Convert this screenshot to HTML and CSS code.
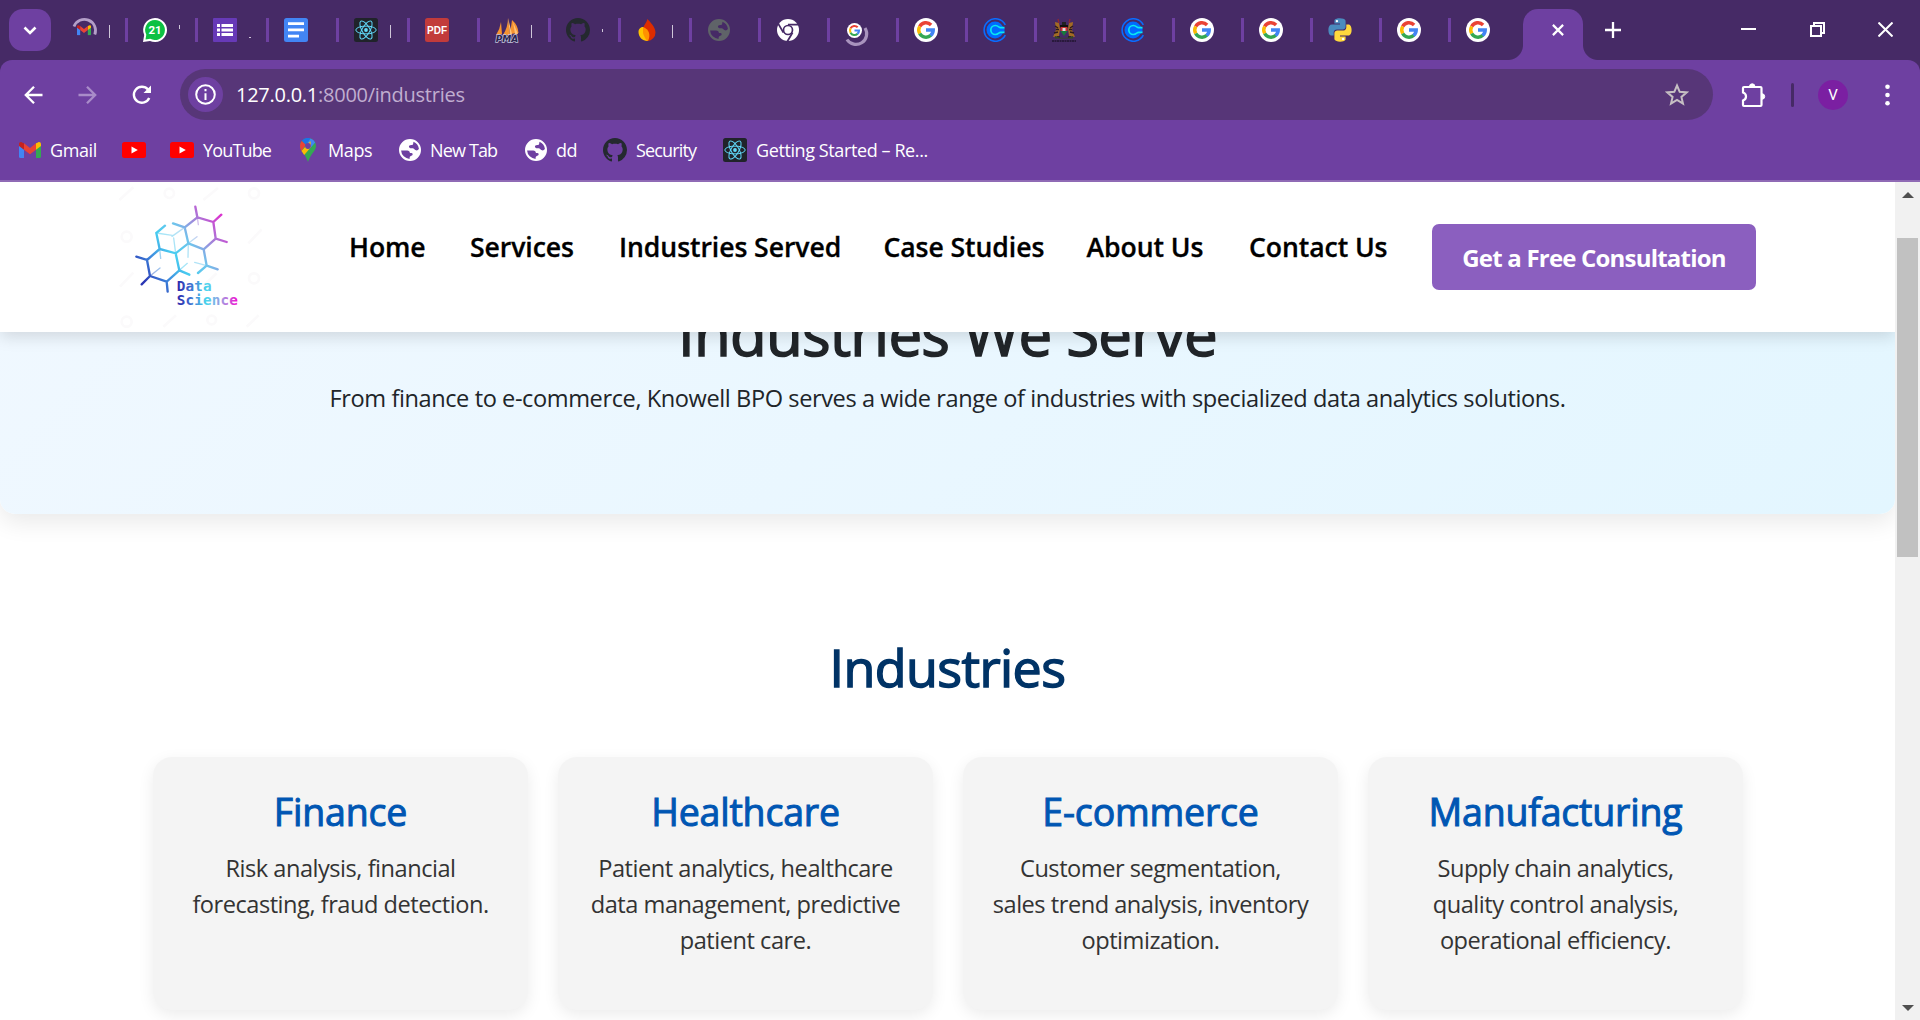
FILE: index.html
```html
<!DOCTYPE html>
<html lang="en">
<head>
<meta charset="utf-8">
<title>Industries</title>
<link rel="stylesheet" href="styles.css">
</head>
<body>
<svg class="defs" aria-hidden="true">
  <defs>
    <symbol id="google" viewBox="0 0 24 24">
      <circle cx="12" cy="12" r="12" fill="#fff"/>
      <g fill="none" stroke-width="3.5">
        <path d="M5.7 8.5A7.2 7.2 0 0 1 17.1 6.9" stroke="#ea4335"/>
        <path d="M5.7 15.5A7.2 7.2 0 0 1 5.7 8.5" stroke="#fbbc05"/>
        <path d="M16.9 17.3A7.2 7.2 0 0 1 5.7 15.5" stroke="#34a853"/>
        <path d="M12 12h7.2A7.2 7.2 0 0 1 16.6 17.5" stroke="#4285f4"/>
      </g>
    </symbol>
    <symbol id="gmail" viewBox="0 0 22 16">
      <path d="M0 3v11.5A1.5 1.5 0 0 0 1.5 16H5V6.7z" fill="#4285f4"/>
      <path d="M22 3v11.5a1.5 1.5 0 0 1-1.500 1.500H17V6.700z" fill="#34a853"/>
      <path d="M17 1.300 19 .4c1.500-.8 3 .2 3 1.800V4l-5 3.800z" fill="#fbbc04"/>
      <path d="M5 1.300 3 .4C1.500-.4 0 .6 0 2.200V4l5 3.800z" fill="#c5221f"/>
      <path d="M5 1.300l6 4.600 6-4.600v6.500l-6 4.500-6-4.500z" fill="#ea4335"/>
    </symbol>
    <symbol id="react" viewBox="0 0 24 24">
      <rect width="24" height="24" rx="2.500" fill="#20232a"/>
      <circle cx="12" cy="12" r="1.900" fill="#61dafb"/>
      <g fill="none" stroke="#61dafb" stroke-width="1">
        <ellipse cx="12" cy="12" rx="10.200" ry="3.900"/>
        <ellipse cx="12" cy="12" rx="10.200" ry="3.900" transform="rotate(60 12 12)"/>
        <ellipse cx="12" cy="12" rx="10.200" ry="3.900" transform="rotate(120 12 12)"/>
      </g>
    </symbol>
    <symbol id="github" viewBox="0 0 16 16">
      <path fill="#24292f" d="M8 0C3.580 0 0 3.580 0 8c0 3.540 2.290 6.530 5.470 7.590.4.070.55-.17.55-.38 0-.19-.01-.82-.01-1.490-2.010.37-2.530-.49-2.690-.94-.09-.23-.48-.94-.82-1.130-.28-.15-.68-.52-.01-.53.63-.01 1.080.58 1.230.82.72 1.210 1.870.87 2.330.66.070-.52.28-.87.51-1.070-1.780-.2-3.640-.89-3.640-3.950 0-.87.31-1.590.82-2.150-.08-.2-.36-1.020.08-2.120 0 0 .67-.21 2.200.82.64-.18 1.320-.27 2-.27s1.360.09 2 .27c1.530-1.040 2.200-.82 2.200-.82.44 1.100.16 1.920.08 2.120.51.56.82 1.270.82 2.150 0 3.070-1.870 3.750-3.650 3.950.29.25.54.73.54 1.480 0 1.070-.01 1.930-.01 2.200 0 .21.15.46.55.38A8.010 8.010 0 0 0 16 8c0-4.420-3.580-8-8-8z"/>
    </symbol>
    <symbol id="globe" viewBox="0 0 22 22">
      <path fill="currentColor" fill-rule="evenodd" d="M11 0a11 11 0 1 0 0 22 11 11 0 0 0 0-22zM14.500 2.700A9 9 0 0 1 19.900 9.800c-.9 1.700-2.200 1.900-3.600 1.200-1-.6-1.300-1.700-2.600-1.800-1.500 0-2.300.2-3.400-.8-.8-.9-.2-2 .9-2.200 1.300-.2 2.600 0 2.900-1.200zM2.100 11.500h6.100c1.700 0 2.700 1 2.700 2.500h1.500c1.200 0 1.700 1.300.9 2.200l-1.900 1c-.9.500-.8 1.700-.8 2.700A9 9 0 0 1 2.100 11.500z"/>
    </symbol>
    <symbol id="calendly" viewBox="0 0 24 24">
      <path d="M23 6.500A12 12 0 1 0 23 17.500" fill="none" stroke="#0a6cff" stroke-width="1.700" transform="translate(.8 .8) scale(.935)"/>
      <circle cx="12" cy="12" r="8.500" fill="#006bff"/>
      <path d="M16 9.300h8v5.400h-8z" fill="#462a66"/>
      <path d="M21.500 9.700h-4c-1.700 0-2-2.200-5.200-2.200a4.500 4.500 0 0 0 0 9c3.200 0 3.500-2.200 5.200-2.200h4" fill="#006bff" stroke="#0ae8f0" stroke-width="1.700"/>
    </symbol>
    <symbol id="youtube" viewBox="0 0 24 16">
      <rect width="24" height="16" rx="2.500" fill="#f00"/><path d="M9.500 4.500v7l6.300-3.500z" fill="#fff"/>
    </symbol>
  </defs>
</svg>

<div class="browser">
  <div class="tabstrip">
    <button class="tab-search"><svg width="14" height="9" viewBox="0 0 14 9"><path d="M1.500 1.500 7 7l5.500-5.500" fill="none" stroke="#fff" stroke-width="2.600"/></svg></button>
    <div class="tabs">
      <div class="tab wide"><svg width="24" height="24" viewBox="0 0 24 24"><path d="M1 8.500A11 11 0 0 1 21.800 16.500" fill="none" stroke="#b49fc8" stroke-width="2.800"/><svg x="4" y="7" width="14" height="10.500"><use href="#gmail"/></svg></svg><i class="sliver bar"></i></div>
      <div class="tab wide"><svg width="24" height="24" viewBox="0 0 24 24"><path d="M12 0a12 12 0 1 1-5 22.900L0 24l1.200-7A12 12 0 0 1 12 0z" fill="#fff"/><path d="M12 2a10 10 0 1 1-4.800 18.800L2.500 21.500l.8-4.700A10 10 0 0 1 12 2z" fill="#0cc143"/><text x="12" y="16.300" text-anchor="middle" class="badge-num">21</text></svg><i class="sliver high"></i></div>
      <div class="tab wide"><svg width="24" height="24" viewBox="0 0 24 24"><rect width="24" height="24" rx="1" fill="#673ab7"/><path d="M4 6h3v3H4zM8.500 6H20v3H8.500zM4 10.500h3v3H4zM8.500 10.500H20v3H8.500zM4 15h3v3H4zM8.500 15H20v3H8.500z" fill="#fff"/></svg><i class="sliver low"></i></div>
      <div class="tab wide"><svg width="24" height="24" viewBox="0 0 24 24"><rect width="24" height="24" rx="2.500" fill="#4285f4"/><path d="M4 4.200h16v2.700H4zM4 10.600h16v2.700H4zM4 16.800h11v2.700H4z" fill="#fff"/></svg></div>
      <div class="tab wide"><svg width="24" height="24"><use href="#react"/></svg><i class="sliver bar"></i></div>
      <div class="tab wide"><svg width="24" height="24" viewBox="0 0 24 24"><rect width="24" height="24" rx="2.500" fill="#c23b3b"/><text x="12" y="16.300" text-anchor="middle" class="pdf">PDF</text></svg></div>
      <div class="tab wide"><svg width="24" height="24" viewBox="0 0 24 24"><path d="M1 17Q5 11 6 4l1 12zM8 17Q13 9 13 0l2 17zM15 16 17 2q6 5 6.500 13z" fill="#f59331"/><path d="M13 0l2 17 2-1zM18 4l2 12h3z" fill="#ffc277"/><text x="12" y="23.600" text-anchor="middle" class="pma">PMA</text></svg><i class="sliver bar"></i></div>
      <div class="tab wide"><svg width="24" height="24"><use href="#github"/></svg><i class="sliver dot"></i></div>
      <div class="tab wide"><svg width="24" height="24" viewBox="0 0 24 24"><path d="M11.500 1C14 4 19.500 9 19.500 14.500A8.500 8.500 0 0 1 11.500 23C8 23 6 16 7 11c.6-4 3.500-6 4.500-10z" fill="#dd2c00"/><path d="M2.500 14C2.500 10.500 5 9 7 9l1.500 2c4 3 4.500 7 3 12C6.500 23 2.500 19 2.500 14z" fill="#ffc400"/><path d="M7 9c6 2 8 8 5 14-2.500-1-4-5-5-8z" fill="#ff9100"/></svg><i class="sliver bar"></i></div>
      <div class="tab dim"><svg width="24" height="24" viewBox="-1 -1 24 24"><use href="#globe" width="22" height="22"/></svg></div>
      <div class="tab"><svg width="24" height="24" viewBox="0 0 24 24"><circle cx="12" cy="12" r="11" fill="#fff"/><circle cx="12" cy="12" r="4.500" fill="none" stroke="#462a66" stroke-width="1.700"/><path d="M12 6.700H22.500M7.400 14.600 2.200 5.600M16.600 14.600 11.300 23.500" stroke="#462a66" stroke-width="1.800"/></svg></div>
      <div class="tab"><svg width="24" height="24" viewBox="0 0 24 24"><path d="M20 10A9.500 9.500 0 0 1 2 21.500" fill="none" stroke="#a893bd" stroke-width="3.200"/><use href="#google" x="2" y="5" width="15" height="15"/></svg></div>
      <div class="tab"><svg width="24" height="24"><use href="#google"/></svg></div>
      <div class="tab"><svg width="24" height="24"><use href="#calendly"/></svg></div>
      <div class="tab"><svg width="24" height="24" viewBox="0 0 24 24"><path d="M3 4l4 1 1 6-1 7-6 1 3-7zM21 4l-4 1-1 6 1 7 6 1-3-7z" fill="#a36b23"/><path d="M3 8l3 2M2 15l4-1M21 8l-3 2M22 15l-4-1M5 19h3M16 19h3M4 11.500h3M17 11.500h3" stroke="#2a1a20" stroke-width="1.500"/><path d="M6 1l1 4M18 1l-1 4" stroke="#8f2834" stroke-width="1.300"/><path d="M8 7h8v3H8z" fill="#111"/><path d="M10 4h4v3h-4z" fill="#222"/><path d="M8.500 9h7v4h-7z" fill="#c83232"/><path d="M8.500 13h7L12 18z" fill="#177a3c"/><path d="M10.500 10h3v3h-3z" fill="#ddd"/><path d="M3 18q9 4 18 0v2.500H3z" fill="#354a22"/><path d="M0 23h24" stroke="#21152f" stroke-width="1.600" stroke-dasharray="2 .5"/></svg></div>
      <div class="tab"><svg width="24" height="24"><use href="#calendly"/></svg></div>
      <div class="tab"><svg width="24" height="24"><use href="#google"/></svg></div>
      <div class="tab"><svg width="24" height="24"><use href="#google"/></svg></div>
      <div class="tab"><svg width="24" height="24" viewBox="0 0 24 24"><path d="M11.900.3C6 .3 6.400 2.900 6.400 2.900v2.700H12v.8H4.100S.4 6 .4 11.900s3.300 5.700 3.300 5.700h2v-2.800s-.1-3.300 3.200-3.300h5.600s3.100.1 3.100-3V3.400S18.100.3 11.900.3z" fill="#4b8bbe"/><circle cx="8.900" cy="3.100" r="1.200" fill="#fff"/><path d="M12.100 23.700c5.900 0 5.500-2.600 5.500-2.600v-2.700H12v-.8h7.900s3.700.4 3.700-5.500-3.300-5.700-3.300-5.700h-2v2.800s.1 3.300-3.200 3.300H9.500s-3.100-.1-3.100 3v5.100s-.5 3.100 5.700 3.100z" fill="#ffd83d"/><circle cx="15.100" cy="20.900" r="1.200" fill="#fff"/></svg></div>
      <div class="tab"><svg width="24" height="24"><use href="#google"/></svg></div>
      <div class="tab last"><svg width="24" height="24"><use href="#google"/></svg></div>
    </div>
    <div class="tab-active"><svg width="12" height="12" viewBox="0 0 12 12"><path d="M.9.9l10.200 10.200M11.100.9.9 11.100" stroke="#fff" stroke-width="2.200"/></svg></div>
    <button class="newtab"><svg width="16" height="16" viewBox="0 0 16 16"><path d="M8 0v16M0 8h16" stroke="#fff" stroke-width="2.300"/></svg></button>
    <div class="window-controls">
      <svg width="15" height="15" viewBox="0 0 15 15"><path d="M0 7h15" stroke="#fff" stroke-width="2"/></svg>
      <svg width="15" height="15" viewBox="0 0 15 15" fill="none" stroke="#fff" stroke-width="2"><path d="M1 4h10v10H1zM4 4V1h10v10h-3"/></svg>
      <svg width="15" height="15" viewBox="0 0 15 15"><path d="M.5.5l14 14M14.500.5l-14 14" stroke="#fff" stroke-width="2"/></svg>
    </div>
  </div>

  <div class="chrome">
    <div class="toolbar">
      <svg class="back" width="20" height="18" viewBox="0 0 20 18" fill="none" stroke="#fff" stroke-width="2.300"><path d="M18.500 9H2M10 .8 1.800 9l8.200 8.200"/></svg>
      <svg class="forward" width="20" height="18" viewBox="0 0 20 18" fill="none" stroke="#a98cc9" stroke-width="2.300"><path d="M.5 9H17M9 .8 17.200 9 9 17.200"/></svg>
      <svg class="reload" width="20" height="20" viewBox="0 0 20 20"><path d="M17.200 13A8 8 0 1 1 16 4.600l1 1.200" fill="none" stroke="#fff" stroke-width="2.400"/><path d="M19 .5V8h-7.500z" fill="#fff"/></svg>
      <div class="omnibox">
        <span class="site-info"><svg width="21" height="21" viewBox="0 0 21 21"><circle cx="10.500" cy="10.500" r="9.300" fill="none" stroke="#fff" stroke-width="2"/><path d="M10.500 9.200V16M10.500 5v2.200" stroke="#fff" stroke-width="2"/></svg></span>
        <span class="url"><b>127.0.0.1</b>:8000/industries</span>
        <svg class="star" width="24" height="24" viewBox="0 0 24 24"><path d="M12 2.500l2.700 6.300 6.900.6-5.200 4.500 1.600 6.700-6-3.600-6 3.600 1.600-6.700L2.400 9.400l6.900-.6z" fill="none" stroke="#c6bfc3" stroke-width="2"/></svg>
      </div>
      <svg class="puzzle" width="26" height="26" viewBox="0 0 26 26"><path d="M4 5h16.500q1 0 1 1v17q0 1-1 1H4q-1 0-1-1v-4.500q3-1 3-4t-3-4V6q0-1 1-1z" fill="none" stroke="#fff" stroke-width="2.200"/><path d="M9.500 4.500a2.700 2.700 0 0 1 5.400 0zM22 11.800a2.700 2.700 0 0 1 0 5.400z" fill="#fff" stroke="#fff"/></svg>
      <i class="divider"></i>
      <span class="avatar">V</span>
      <svg class="menu" width="5" height="22" viewBox="0 0 5 22" fill="#fff"><circle cx="2.500" cy="2.700" r="2.300"/><circle cx="2.500" cy="11" r="2.300"/><circle cx="2.500" cy="19.300" r="2.300"/></svg>
    </div>
    <div class="bookmarks">
      <span class="bm b1"><svg width="22" height="16"><use href="#gmail"/></svg><em>Gmail</em></span>
      <span class="bm b2"><svg width="24" height="16"><use href="#youtube"/></svg></span>
      <span class="bm b3"><svg width="24" height="16"><use href="#youtube"/></svg><em class="tight">YouTube</em></span>
      <span class="bm b4"><svg width="16" height="24" viewBox="0 0 16 24"><path d="M8 0a8 8 0 0 1 8 8c0 5-5 7-8 16-3-9-8-11-8-16a8 8 0 0 1 8-8z" fill="#34a853"/><path d="M1.800 2.800 6 6.500 1.500 13Q0 10.500 0 8a8 8 0 0 1 1.800-5.200z" fill="#ea4335"/><path d="M1.800 2.800A8 8 0 0 1 10.500.4L6 7z" fill="#1a73e8"/><path d="M10.500.4A8 8 0 0 1 15.200 4.500L10 10.500 6 7z" fill="#4285f4"/><path d="M1.500 13 10.500 3l.5 6-6.800 8z" fill="#fbbc04"/><circle cx="8" cy="8" r="2.900" fill="#6e40a1"/></svg><em>Maps</em></span>
      <span class="bm b5"><svg width="22" height="22"><use href="#globe"/></svg><em class="tight">New Tab</em></span>
      <span class="bm b6"><svg width="22" height="22"><use href="#globe"/></svg><em>dd</em></span>
      <span class="bm b7"><svg width="24" height="24"><use href="#github"/></svg><em class="tight">Security</em></span>
      <span class="bm b8"><svg width="24" height="24"><use href="#react"/></svg><em>Getting Started – Re...</em></span>
    </div>
  </div>

  <div class="viewport">
    <div class="page">
      <header class="site-header">
        <svg class="logo" width="147" height="150" viewBox="45 6 441 450">
          <defs>
            <linearGradient id="lg" gradientUnits="userSpaceOnUse" x1="130" y1="300" x2="365" y2="120"><stop offset="0" stop-color="#2b36b4"/><stop offset=".22" stop-color="#3f8fe0"/><stop offset=".4" stop-color="#48cdf0"/><stop offset=".6" stop-color="#70c4ec"/><stop offset=".8" stop-color="#a67fd8"/><stop offset="1" stop-color="#d936cf"/></linearGradient>
            <linearGradient id="lt" gradientUnits="userSpaceOnUse" x1="232" y1="0" x2="415" y2="0"><stop offset="0" stop-color="#2c27ab"/><stop offset=".2" stop-color="#3e67cf"/><stop offset=".48" stop-color="#49d8ee"/><stop offset=".75" stop-color="#a98fe0"/><stop offset="1" stop-color="#f508cf"/></linearGradient>
          </defs>
          <g class="watermark"><path d="M58 60 100 22M310 60l44-36M445 190l40-42M60 320l40-42M310 318l40-38M190 440l38-34M440 440l36-34"/><circle cx="208" cy="40" r="14"/><circle cx="462" cy="40" r="15"/><circle cx="80" cy="170" r="15"/><circle cx="80" cy="425" r="15"/><circle cx="462" cy="295" r="15"/><circle cx="335" cy="420" r="13"/></g>
          <g fill="none" stroke="url(#lg)" stroke-width="7" stroke-linecap="round">
            <path d="M286 80l6 32 48 14 24-22M292 112l-38 30-35-12M340 126l7 50 33 10M347 176l-36 32M254 142l11 48-38 30-48-13-10-48 26-22M311 208l9 49 33 11M320 257l-26 22M311 208l-46-18M227 220l11 51 30 13M238 271l-38 34 3 30M200 305l-50-17-25 25M150 288l-9-48-32-10M141 240l38-33"/>
            <path class="thin" d="M292 112l3 22M265 190l-1 42M265 190l26-20M179 207l3 28M150 288l30-24M169 159l48 7M227 220l-6-46M254 142l-38 27M238 271l24-21M320 257l-36-10"/>
          </g>
          <text class="logo-text" fill="url(#lt)" x="230" y="334" textLength="105">Data</text>
          <text class="logo-text" fill="url(#lt)" x="230" y="376" textLength="184">Science</text>
        </svg>
        <nav class="nav">
          <a>Home</a><a>Services</a><a>Industries Served</a><a>Case Studies</a><a>About Us</a><a>Contact Us</a>
        </nav>
        <a class="cta">Get a Free Consultation</a>
      </header>
      <section class="hero">
        <h1>Industries We Serve</h1>
        <p>From finance to e-commerce, Knowell BPO serves a wide range of industries with specialized data analytics solutions.</p>
      </section>
      <section class="industries">
        <h2>Industries</h2>
        <div class="cards">
          <article class="card"><h3>Finance</h3><p>Risk analysis, financial<br>forecasting, fraud detection.</p></article>
          <article class="card"><h3>Healthcare</h3><p>Patient analytics, healthcare<br>data management, predictive<br>patient care.</p></article>
          <article class="card"><h3>E-commerce</h3><p>Customer segmentation,<br>sales trend analysis, inventory<br>optimization.</p></article>
          <article class="card"><h3>Manufacturing</h3><p>Supply chain analytics,<br>quality control analysis,<br>operational efficiency.</p></article>
        </div>
      </section>
    </div>
    <div class="scrollbar">
      <svg width="12" height="6" viewBox="0 0 12 6"><path d="M6 0l6 6H0z" fill="#505050"/></svg>
      <div class="thumb"></div>
      <svg class="down" width="12" height="6" viewBox="0 0 12 6"><path d="M0 0h12L6 6z" fill="#505050"/></svg>
    </div>
  </div>
</div>
</body>
</html>
```

FILE: styles.css
```css
* { box-sizing: border-box; }
body { margin: 0; overflow: hidden; font-family: "Open Sans", "Noto Sans", sans-serif; background: #fff; }
button { border: 0; padding: 0; background: none; }
.defs { display: block; width: 0; height: 0; }
svg { flex: none; }
.browser { width: 1920px; height: 1020px; display: flex; flex-direction: column; background: #462a66; overflow: hidden; }

/* Tab strip */
.tabstrip { height: 60px; flex: none; display: flex; align-items: flex-start; }
.tab-search { width: 42px; height: 42px; margin: 9px 0 0 9px; border-radius: 14px; background: #6e40a1; display: flex; align-items: center; justify-content: center; }
.tabs { display: flex; margin-left: 6.500px; width: 1465.500px; }
.tab { width: 69px; height: 24px; margin-top: 18px; padding-left: 15px; display: flex; flex: none; border-right: 3px solid #6e40a1; color: #fff; }
.tab svg { overflow: visible; }
.tab.wide { width: 70.470px; }
.tab.last { border-right-color: transparent; }
.tab.dim { color: #5f6368; }
.sliver { width: 1px; margin-left: 12px; background: #cfc6d8; }
.sliver.bar { height: 13px; margin-top: 7px; }
.sliver.high { height: 4px; margin-top: 7px; }
.sliver.low { width: 2px; height: 1px; margin-top: 19px; }
.sliver.dot { height: 3px; margin-top: 11px; }
.badge-num { font: 700 11.5px Roboto, sans-serif; fill: #fff; }
.pdf { font: 700 10px "Liberation Sans", sans-serif; fill: #fff; }
.pma { font: italic 700 9px "DejaVu Sans", sans-serif; fill: #2a2550; stroke: #c4c4dc; stroke-width: 1.4px; paint-order: stroke; }
.tab-active { position: relative; width: 60px; height: 51px; margin-top: 9px; border-radius: 15px 15px 0 0; background: #6e40a1; display: flex; align-items: center; padding: 0 0 9px 29px; }
.tab-active::before, .tab-active::after { content: ""; position: absolute; bottom: 0; width: 15px; height: 15px; }
.tab-active::before { left: -15px; background: radial-gradient(circle at 0 0, transparent 14.5px, #6e40a1 15.5px); }
.tab-active::after { right: -15px; background: radial-gradient(circle at 100% 0, transparent 14.5px, #6e40a1 15.5px); }
.newtab { margin: 22px 0 0 22px; height: 16px; width: 16px; display: flex; }
.window-controls { display: flex; gap: 53.5px; margin: 22px 0 0 120px; }

/* Toolbar */
.chrome { height: 122px; flex: none; background: #6e40a1; border-radius: 12px 12px 0 0; border-bottom: 2px solid #8f6ab5; }
.toolbar { height: 69px; padding: 0 0 0 23.500px; display: flex; align-items: center; }
.forward { margin-left: 34px; }
.reload { margin-left: 34px; }
.omnibox { width: 1533px; height: 51px; margin-left: 28.500px; border-radius: 26px; background: #573678; display: flex; align-items: center; padding: 0 24px 0 8px; }
.site-info { width: 35px; height: 35px; border-radius: 50%; background: #6e40a1; display: flex; align-items: center; justify-content: center; }
.url { margin-left: 13px; font-size: 20px; line-height: 28px; letter-spacing: -.26px; color: #c0aed0; flex: 1; }
.url b { font-weight: 400; color: #fff; }
.puzzle { margin-left: 27px; }
.divider { width: 3px; height: 24px; margin-left: 25px; border-radius: 2px; background: #462a66; }
.avatar { width: 30px; height: 30px; margin-left: 24px; border-radius: 50%; background: #7b1fa2; color: #fff; font: 15px/30px Roboto, sans-serif; text-align: center; }
.menu { margin-left: 36.5px; }

/* Bookmarks */
.bookmarks { height: 51px; display: grid; grid-template-columns: 103px 48px 129px 100px 126px 78px 120px 260px; padding-left: 19px; color: #fff; align-items: start; padding-top: 5.500px; }
.bm { display: flex; align-items: center; height: 30px; }
.bm em { font-style: normal; font-size: 18px; line-height: 26px; letter-spacing: -.4px; margin-left: 9px; white-space: nowrap; }
.bm em.tight { letter-spacing: -.85px; }
.b4 { padding-left: 1px; }
.b4 em { margin-left: 12px; }

/* Page */
.viewport { flex: 1; display: grid; grid-template-columns: 1895px 25px; min-height: 0; background: #fff; }
.page { overflow: hidden; background: #fff; }
.site-header { position: relative; z-index: 2; height: 150px; margin-bottom: -50px; background: #fff; box-shadow: 0 5px 15px rgba(0,0,0,.13); display: flex; align-items: flex-start; padding-left: 115px; }
.logo { display: block; }
.logo-text { font: 700 43px "DejaVu Sans Mono", monospace; }
.watermark { fill: none; stroke: #fbfafb; stroke-width: 8; }
.thin { stroke-width: 4; stroke-opacity: .5; }
.nav { width: 1170px; margin-top: 46.500px; padding-left: 87px; display: grid; grid-template-columns: 121px 149px 264.5px 203px 162.500px 183px; }
.nav a { font-size: 26.6px; font-weight: 600; line-height: 36px; color: #000; white-space: nowrap; letter-spacing: -.08px; -webkit-text-stroke: .3px #000; }
.cta { width: 324px; height: 66px; margin-top: 42px; border-radius: 7px; background: #8b5fbf; color: #fff; font-size: 24px; font-weight: 700; line-height: 68px; letter-spacing: -.8px; text-align: center; white-space: nowrap; }
.hero { height: 232px; padding-top: 15px; border-radius: 0 0 15px 15px; background: linear-gradient(135deg, #f0f8ff, #e3f6ff); box-shadow: 0 8px 25px rgba(0,0,0,.09); text-align: center; color: #212529; }
h1, h2, h3, p { margin: 0; }
.hero h1 { font-size: 60px; font-weight: 500; line-height: 72px; letter-spacing: -.8px; -webkit-text-stroke: 1.500px #212529; }
.hero p { margin-top: 11px; font-size: 23.6px; line-height: 36px; letter-spacing: -.42px; }
.industries { padding: 122px 153px 60px; }
.industries h2 { text-align: center; font-size: 52px; font-weight: 500; line-height: 62px; letter-spacing: -.6px; color: #036; -webkit-text-stroke: 1.400px #036; }
.cards { display: grid; grid-template-columns: repeat(4, 375px); gap: 30px; margin-top: 59px; }
.card { height: 253px; padding-top: 31.500px; border-radius: 19px; background: #f4f4f4; box-shadow: 0 5px 16px rgba(0,0,0,.08); text-align: center; }
.card h3 { font-size: 37.5px; font-weight: 500; line-height: 45px; letter-spacing: -.2px; color: #0056b3; -webkit-text-stroke: 1px #0056b3; }
.card p { margin-top: 16px; font-size: 23.6px; line-height: 36px; letter-spacing: -.48px; color: #333; }

/* Scrollbar */
.scrollbar { background: #f1f1f1; display: flex; flex-direction: column; align-items: center; padding: 10px 0 9px; }
.thumb { width: 21px; height: 319px; margin-top: 40px; background: #c1c1c1; }
.down { margin-top: auto; }
```
